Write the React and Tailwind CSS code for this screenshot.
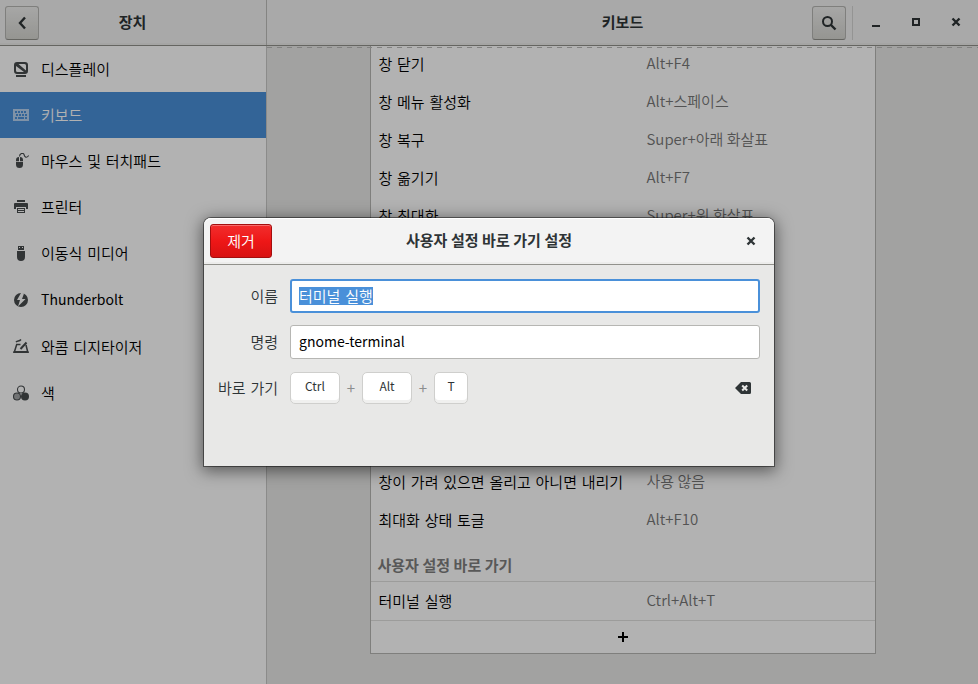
import React from "react";

const IconDisplay = () => (
  <svg width="16" height="16" viewBox="0 0 16 16" aria-hidden="true">
    <path fillRule="evenodd" fill="currentColor" d="M4 1h8a3 3 0 0 1 3 3v6a3 3 0 0 1-3 3H4a3 3 0 0 1-3-3V4a3 3 0 0 1 3-3zm.5 2A1.500 1.500 0 0 0 3 4.500v5A1.500 1.500 0 0 0 4.500 11h7A1.500 1.500 0 0 0 13 9.500v-5A1.500 1.500 0 0 0 11.500 3z" />
    <path fill="currentColor" d="M3 3h2.500l7.500 6.500V11h-2L3 5zM3 14h10v2H3z" />
  </svg>
);

const IconKeyboard = () => (
  <svg width="16" height="16" viewBox="0 0 16 16" aria-hidden="true">
    <path fillRule="evenodd" fill="currentColor" d="M0 2h16v12H0zM2 4v2h2V4zm3 0v2h2V4zm3 0v2h2V4zm3 0v2h2V4zM3 7v2h2V7zm3 0v2h2V7zm3 0v2h2V7zm3 0v2h2V7zM2 10v2h2v-2zm3 0v2h6v-2zm7 0v2h2v-2z" />
  </svg>
);

const IconMouse = () => (
  <svg width="16" height="16" viewBox="0 0 16 16" aria-hidden="true">
    <path d="M6.500 3.500C6.500 0 10.500-.5 11 1.500S13 6 15.700 2.500" fill="none" stroke="currentColor" strokeWidth="1.100" />
    <path fill="currentColor" d="M6 4v4.200H3V7a3 3 0 0 1 3-3zM7 4a3 3 0 0 1 3 3v1.200H7zM3 9h7v2.500a3.500 3.500 0 0 1-7 0z" />
  </svg>
);

const IconPrinter = () => (
  <svg width="16" height="16" viewBox="0 0 16 16" aria-hidden="true">
    <path fillRule="evenodd" fill="currentColor" d="M4 1h8v2H4zM2 4h12a1 1 0 0 1 1 1v5h-2V8H3v2H1V5a1 1 0 0 1 1-1zm2 5h8v5H4zm1 1v1h6v-1zm0 2v1h6v-1z" />
  </svg>
);

const IconUsb = () => (
  <svg width="16" height="16" viewBox="0 0 16 16" aria-hidden="true">
    <path fillRule="evenodd" fill="currentColor" d="M5 1h6v4H5zm1 1v1h1V2zm3 0v1h1V2zM4 6h8v6a4 4 0 0 1-8 0z" />
  </svg>
);

const IconThunderbolt = () => (
  <svg width="16" height="16" viewBox="0 0 16 16" aria-hidden="true">
    <path fillRule="evenodd" fill="currentColor" d="M8 1a7 7 0 1 0 0 14A7 7 0 0 0 8 1zm0 0-4 7h3l-2 6.500L12.500 7H9l2-5.500z" />
  </svg>
);

const IconTablet = () => (
  <svg width="16" height="16" viewBox="0 0 16 16" aria-hidden="true">
    <path d="M7.500 5.500H3.700L1.500 12.500M13 6l1.600 6.500" fill="none" stroke="currentColor" strokeWidth="1.500" />
    <path d="M3 3.200C4.500 1 6 3 8 .5" fill="none" stroke="currentColor" strokeWidth="1.400" />
    <path d="M13.500 3.500 7.500 10" fill="none" stroke="currentColor" strokeWidth="2" />
    <path d="M.5 12h15l.5 2H0z" fill="currentColor" />
  </svg>
);

const IconColor = () => (
  <svg width="16" height="16" viewBox="0 0 16 16" aria-hidden="true">
    <circle cx="8" cy="4.500" r="3.500" fill="none" stroke="currentColor" strokeWidth="1.100" />
    <circle cx="4" cy="11.500" r="3.500" fill="currentColor" fillOpacity="0.5" stroke="currentColor" strokeWidth="1.100" />
    <circle cx="12" cy="11.500" r="4" fill="currentColor" />
  </svg>
);

const IconClose = () => (
  <svg width="16" height="16" viewBox="0 0 16 16" aria-hidden="true">
    <path d="M4.500 4.500l7 7M11.500 4.500l-7 7" stroke="currentColor" strokeWidth="2.400" />
  </svg>
);

const devices = [
  { label: "디스플레이", Icon: IconDisplay },
  { label: "키보드", Icon: IconKeyboard, selected: true },
  { label: "마우스 및 터치패드", Icon: IconMouse },
  { label: "프린터", Icon: IconPrinter },
  { label: "이동식 미디어", Icon: IconUsb },
  { label: "Thunderbolt", Icon: IconThunderbolt, latin: true },
  { label: "와콤 디지타이저", Icon: IconTablet },
  { label: "색", Icon: IconColor },
];

const upperShortcuts = [
  ["창 닫기", "Alt+F4"],
  ["창 메뉴 활성화", "Alt+스페이스"],
  ["창 복구", "Super+아래 화살표"],
  ["창 옮기기", "Alt+F7"],
  ["창 최대화", "Super+위 화살표"],
];

const lowerShortcuts = [
  ["창이 가려 있으면 올리고 아니면 내리기", "사용 않음"],
  ["최대화 상태 토글", "Alt+F10"],
];

const koreanFont = "font-['DejaVu_Sans','Noto_Sans_CJK_KR_DemiLight','Noto_Sans_CJK_KR',sans-serif] font-[350]";
const valueFont = "font-['Noto_Sans_CJK_KR_DemiLight','Noto_Sans_CJK_KR',sans-serif] font-[350]";
const latinFont = "font-['Noto_Sans_CJK_KR',sans-serif] font-normal";
const titleFont = "font-['Inter','Noto_Sans_CJK_KR',sans-serif] font-bold";

function ShortcutRow({ name, keys }) {
  return (
    <li className="flex h-[38px] items-center pl-2">
      <span className="w-[268px] shrink-0 pt-[2px] text-black">{name}</span>
      <span className={`pb-[2px] text-[#777777] ${valueFont}`}>{keys}</span>
    </li>
  );
}

function KeyCap({ children, wide }) {
  return (
    <kbd
      className={`flex h-8 items-center justify-center rounded-[5px] border border-[#cfcfcd] bg-white pb-1 text-xs text-[#2e3436] shadow-[inset_0_-3px_#f0f0ef] ${latinFont} ${
        wide ? "w-[50px]" : "w-[34px]"
      }`}
    >
      {children}
    </kbd>
  );
}

const headerButton =
  "flex size-[34px] items-center justify-center rounded-[3px] border border-[#b6b6b3] border-b-[#91918c] bg-linear-to-b from-[#efefee] to-[#d6d6d1] text-[#2e3436]";
const windowButton = "flex size-10 items-center justify-center";

export default function App() {
  return (
    <div
      className={`relative flex h-screen flex-col overflow-hidden bg-[#e8e8e7] text-[15px] leading-[22px] text-[#2e3436] ${koreanFont}`}
    >
      <header className="flex h-[46px] shrink-0 border-b border-[#91918c] bg-[#f3f3f3] shadow-[inset_0_-2px_#ececeb]">
        <div className="flex w-[267px] shrink-0 items-center border-r border-[#bebebb] pl-[5px]">
          <button type="button" aria-label="뒤로" className={headerButton}>
            <svg width="16" height="16" viewBox="0 0 16 16" aria-hidden="true">
              <path d="M11 2.500 6 8l5 5.500" fill="none" stroke="currentColor" strokeWidth="2.400" />
            </svg>
          </button>
          <h2 className={`flex-1 pr-10 text-center ${titleFont}`}>장치</h2>
        </div>
        <div className="grid flex-1 grid-cols-[1fr_auto_1fr] items-center">
          <h1 className={`col-start-2 ${titleFont}`}>키보드</h1>
          <div className="flex items-center justify-end pr-[2px]">
            <button type="button" aria-label="검색" className={headerButton}>
              <svg width="16" height="16" viewBox="0 0 16 16" aria-hidden="true">
                <circle cx="6.500" cy="6.500" r="4.500" fill="none" stroke="currentColor" strokeWidth="2" />
                <path d="M9.500 9.500l5 5" stroke="currentColor" strokeWidth="2.400" />
              </svg>
            </button>
            <span className="ml-[6px] mr-[3px] h-[34px] w-px bg-[#d5d5d3]" />
            <button type="button" aria-label="최소화" className={windowButton}>
              <svg width="16" height="16" viewBox="0 0 16 16" aria-hidden="true">
                <path d="M4 10h8v2H4z" fill="currentColor" />
              </svg>
            </button>
            <button type="button" aria-label="최대화" className={windowButton}>
              <svg width="16" height="16" viewBox="0 0 16 16" aria-hidden="true">
                <path d="M5 4h6v6H5z" fill="none" stroke="currentColor" strokeWidth="2" />
              </svg>
            </button>
            <button type="button" aria-label="닫기" className={windowButton}>
              <svg width="16" height="16" viewBox="0 0 16 16" aria-hidden="true">
                <path d="M4.500 3.500l7 7M11.500 3.500l-7 7" stroke="currentColor" strokeWidth="2.400" />
              </svg>
            </button>
          </div>
        </div>
      </header>

      <div className="flex min-h-0 flex-1">
        <nav className="w-[267px] shrink-0 border-r border-[#c8c8c6] bg-white">
          {devices.map(({ label, Icon, selected, latin }) => (
            <a
              key={label}
              href="#"
              className={`flex items-center gap-3 px-[13px] ${latin ? "h-12" : "h-[46px]"} ${
                selected ? "bg-[#4a90d9] text-white" : "text-black"
              }`}
            >
              <span className={selected ? "opacity-60" : "text-[#474b4d]"}>
                <Icon />
              </span>
              <span className={latin ? `pb-[2px] text-sm ${latinFont}` : "pt-[2px]"}>{label}</span>
            </a>
          ))}
        </nav>

        <main className="relative min-w-0 flex-1 overflow-hidden">
          <div className="absolute inset-x-0 top-px h-px bg-[repeating-linear-gradient(90deg,#bcbcbb_0_5px,transparent_5px_10px)]" />
          <div className="mx-auto w-[506px] border-x border-b border-[#b6b6b3] bg-white">
            <ul className="-mt-px">
              {upperShortcuts.map(([name, keys]) => (
                <ShortcutRow key={name} name={name} keys={keys} />
              ))}
              <li className="h-[228px]" aria-hidden="true" />
              {lowerShortcuts.map(([name, keys]) => (
                <ShortcutRow key={name} name={name} keys={keys} />
              ))}
            </ul>
            <h3 className={`flex h-[43px] items-end border-b border-[#e0e0df] px-[7px] pb-1 text-[#7f7f7f] ${titleFont}`}>
              사용자 설정 바로 가기
            </h3>
            <ul>
              <ShortcutRow name="터미널 실행" keys="Ctrl+Alt+T" />
            </ul>
            <button
              type="button"
              aria-label="추가"
              className="flex h-[33px] w-full items-center justify-center border-t border-[#e0e0df] text-black"
            >
              <svg width="16" height="16" viewBox="0 0 16 16" aria-hidden="true">
                <path d="M3 7h4V3h2v4h4v2H9v4H7V9H3z" fill="currentColor" />
              </svg>
            </button>
          </div>
        </main>
      </div>

      <div className="absolute inset-0 flex items-center justify-center bg-black/30">
        <form
          role="dialog"
          aria-labelledby="dialog-title"
          className="flex h-[248px] w-[570px] flex-col rounded-t-[7px] bg-[#e8e8e7] shadow-[0_0_0_1px_rgba(0,0,0,0.45),0_3px_16px_2px_rgba(0,0,0,0.5)]"
        >
          <header className="grid h-[47px] shrink-0 grid-cols-[1fr_auto_1fr] items-center rounded-t-[7px] border-b border-[#91918c] bg-[#f3f3f3] px-[6px] shadow-[inset_0_1px_white,inset_0_-2px_#ececeb]">
            <button
              type="button"
              className="h-[34px] w-[62px] rounded-[3px] border border-[#a40e0e] bg-linear-to-b from-[#f22c2c] via-[#ee1717] to-[#d81212] pt-[2px] text-white shadow-[inset_0_1px_#f76b6b]"
            >
              제거
            </button>
            <h2 id="dialog-title" className={titleFont}>
              사용자 설정 바로 가기 설정
            </h2>
            <button type="button" aria-label="닫기" className="flex size-[34px] items-center justify-center justify-self-end">
              <IconClose />
            </button>
          </header>
          <div className="grid grid-cols-[60px_1fr] items-center gap-3 px-[14px] pt-[14px]">
            <label htmlFor="name" className="pt-[2px] text-right">이름</label>
            <div className="flex h-[34px] items-center rounded-[3px] border-2 border-[#4a90d9] bg-white px-[7px]">
              <input
                id="name"
                defaultValue="터미널 실행"
                className="h-[18px] field-sizing-content bg-[#4a90d9] pt-[2px] text-white outline-none"
              />
            </div>
            <label htmlFor="command" className="pt-[2px] text-right">명령</label>
            <input
              id="command"
              defaultValue="gnome-terminal"
              className={`h-[34px] rounded-[3px] border border-[#b6b6b3] bg-white px-2 pb-[2px] text-sm text-black outline-none ${latinFont}`}
            />
            <span className="pt-[2px] text-right whitespace-nowrap">바로 가기</span>
            <div className="flex h-[34px] items-center">
              <KeyCap wide>Ctrl</KeyCap>
              <span className={`w-[22px] text-center text-[#8b8e8f] ${latinFont}`}>+</span>
              <KeyCap wide>Alt</KeyCap>
              <span className={`w-[22px] text-center text-[#8b8e8f] ${latinFont}`}>+</span>
              <KeyCap>T</KeyCap>
              <button type="button" aria-label="지우기" className="ml-auto flex size-[34px] items-center justify-center">
                <svg width="16" height="16" viewBox="0 0 16 16" aria-hidden="true">
                  <path d="M6 2h8.500A1.500 1.500 0 0 1 16 3.500v9a1.500 1.500 0 0 1-1.500 1.500H6L0 8z" fill="currentColor" />
                  <path d="M7.200 5.500l5 5M12.200 5.500l-5 5" stroke="#e8e8e7" strokeWidth="2" />
                </svg>
              </button>
            </div>
          </div>
        </form>
      </div>
    </div>
  );
}
